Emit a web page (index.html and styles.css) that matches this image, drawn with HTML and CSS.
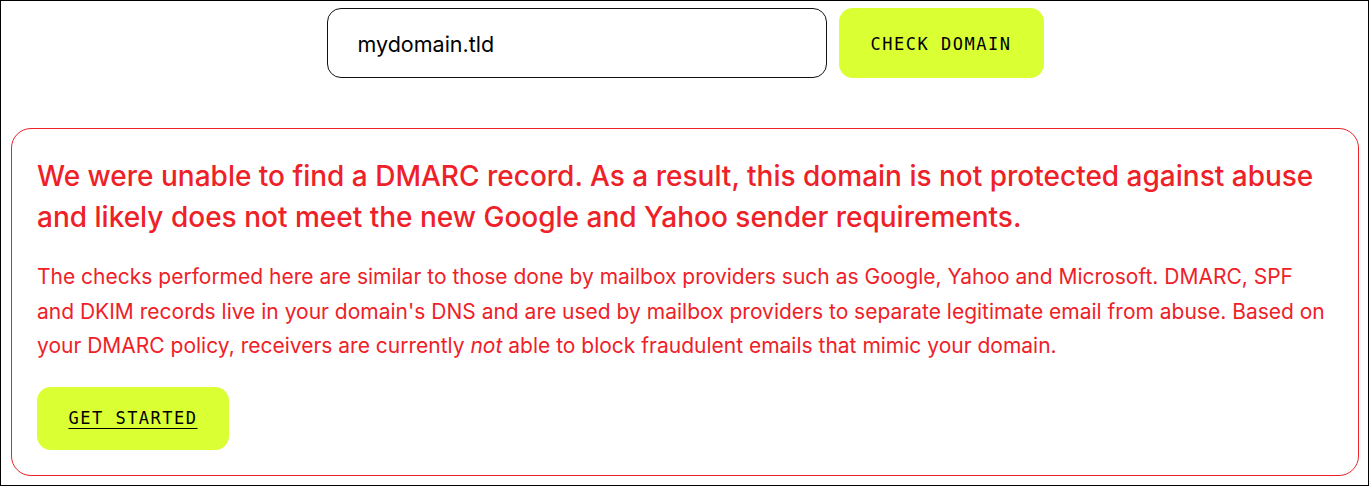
FILE: index.html
```html
<!doctype html>
<html lang="en">
    <head>
        <meta charset="UTF-8">
        <meta name="viewport" content="width=device-width, initial-scale=1.0">
        <title>DMARC Domain Checker</title>
        <link rel="stylesheet" href="styles.css">
    </head>
    <body>
        <div class="frame">
            <form class="check-form">
                <input class="domain-input" type="text" value="mydomain.tld">
                <button class="btn btn-check" type="button">CHECK DOMAIN</button>
            </form>

            <!-- Resultat de la verification -->
            <div class="result-card">
                <h2 class="result-title">We were unable to find a DMARC record. As a result, this domain is not protected against abuse and likely does not meet the new Google and Yahoo sender requirements.</h2>
                <p class="result-text">The checks performed here are similar to those done by mailbox providers such as Google, Yahoo and Microsoft. DMARC, SPF and DKIM records live in your domain's DNS and are used by mailbox providers to separate legitimate email from abuse. Based on your DMARC policy, receivers are currently <em>not</em> able to block fraudulent emails that mimic your domain.</p>
                <a class="btn btn-start" href="#">GET STARTED</a>
            </div>
        </div>
    </body>
</html>
```

FILE: styles.css
```css
:root {
    --red-color: #ee2128;
    --lime-color: #daff33;
    --dark-color: #111111;
}
* {
    box-sizing: border-box;
}
html, body {
    margin: 0;
    background-color: #fff;
}
body {
    font-family: Inter, "Noto Sans", sans-serif;
}

.frame {
    width: 1369px;
    height: 486px;
    border: 1px solid #000;
    padding: 7px 9px 0 10px;
}

/* Formulaire */
.check-form {
    display: flex;
    justify-content: center;
    gap: 12px;
    margin: 0 0 50px 0;
}

.domain-input {
    width: 500px;
    height: 70px;
    padding: 2px 30px 0;
    border: 1px solid var(--dark-color);
    border-radius: 14px;
    font-family: Inter, sans-serif;
    font-size: 21.5px;
    color: #000;
    outline: none;
}

.btn {
    display: inline-flex;
    align-items: center;
    justify-content: center;
    background-color: var(--lime-color);
    border: none;
    border-radius: 14px;
    font-family: "DejaVu Sans Mono", monospace;
    font-size: 17px;
    letter-spacing: 1.5px;
    color: #000;
}

.btn-check {
    width: 205px;
    height: 70px;
    padding-top: 2px;
}

/* Carte de resultat */
.result-card {
    border: 1px solid var(--red-color);
    border-radius: 20px;
    padding: 27px 25px 25px;
    color: var(--red-color);
}

.result-title {
    margin: 0 0 22px 0;
    font-size: 28px;
    font-weight: 500;
    line-height: 41px;
}

.result-text {
    margin: 0 0 23px 0;
    font-size: 21px;
    line-height: 34.5px;
}

.btn-start {
    width: 192px;
    height: 63px;
    text-decoration: underline;
    text-underline-offset: 4px;
}
```
